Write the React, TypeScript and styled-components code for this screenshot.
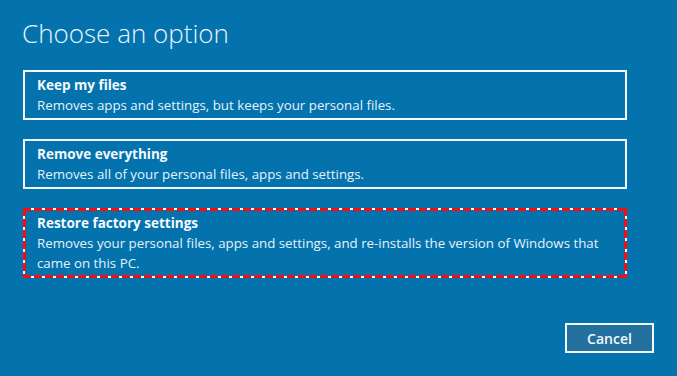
import styled, { createGlobalStyle } from 'styled-components';

const GlobalStyle = createGlobalStyle`
  html, body {
    margin: 0;
    padding: 0;
    background: #0472ad;
  }
  * {
    box-sizing: border-box;
  }
`;

const Page = styled.div`
  height: 376px;
  padding: 14px 23px 0 23px;
  display: flex;
  flex-direction: column;
  font-family: 'Open Sans', 'Noto Sans', sans-serif;
  color: #e4f2fb;
`;

const Title = styled.h1`
  margin: 0 0 18px -1px;
  font-size: 26px;
  font-weight: 300;
  line-height: 38px;
  color: #eaf5fc;
`;

const OptionList = styled.div`
  display: flex;
  flex-direction: column;
  gap: 19px;
  width: 604px;
`;

const dash = (dir: string) =>
  `repeating-linear-gradient(${dir}, #ff0a0a 0 8px, transparent 8px 11px)`;

const Option = styled.div<{ $focused?: boolean }>`
  position: relative;
  border: 2px solid #f2f9fd;
  padding: 3px 12px 3px 12px;
  display: flex;
  flex-direction: column;

  &::after {
    content: '';
    display: ${(p) => (p.$focused ? 'block' : 'none')};
    position: absolute;
    inset: -2px;
    pointer-events: none;
    background:
      ${dash('to right')} top left / 100% 3px no-repeat,
      ${dash('to right')} bottom left / 100% 3px no-repeat,
      ${dash('to bottom')} top left / 3px 100% no-repeat,
      ${dash('to bottom')} top right / 3px 100% no-repeat;
  }
`;

const OptionTitle = styled.div`
  font-size: 13.5px;
  font-weight: 700;
  line-height: 20px;
  color: #f4fafd;
`;

const OptionText = styled.div`
  font-size: 13.3px;
  line-height: 20px;
`;

const Footer = styled.div`
  display: flex;
  justify-content: flex-end;
  margin-top: 45px;
`;

const CancelButton = styled.button`
  width: 89px;
  height: 30px;
  border: 2px solid #f2f9fd;
  background: #23709f;
  color: #f4fafd;
  font-family: 'Open Sans', 'Noto Sans', sans-serif;
  font-size: 14px;
  font-weight: 600;
  padding: 0;
`;

const options = [
  {
    title: 'Keep my files',
    text: 'Removes apps and settings, but keeps your personal files.',
  },
  {
    title: 'Remove everything',
    text: 'Removes all of your personal files, apps and settings.',
  },
  {
    title: 'Restore factory settings',
    text: 'Removes your personal files, apps and settings, and re-installs the version of Windows that came on this PC.',
    focused: true,
  },
];

export default function App() {
  return (
    <>
      <GlobalStyle />
      <Page>
        <Title>Choose an option</Title>
        <OptionList>
          {options.map((o) => (
            <Option key={o.title} $focused={o.focused}>
              <OptionTitle>{o.title}</OptionTitle>
              <OptionText>{o.text}</OptionText>
            </Option>
          ))}
        </OptionList>
        <Footer>
          <CancelButton>Cancel</CancelButton>
        </Footer>
      </Page>
    </>
  );
}
